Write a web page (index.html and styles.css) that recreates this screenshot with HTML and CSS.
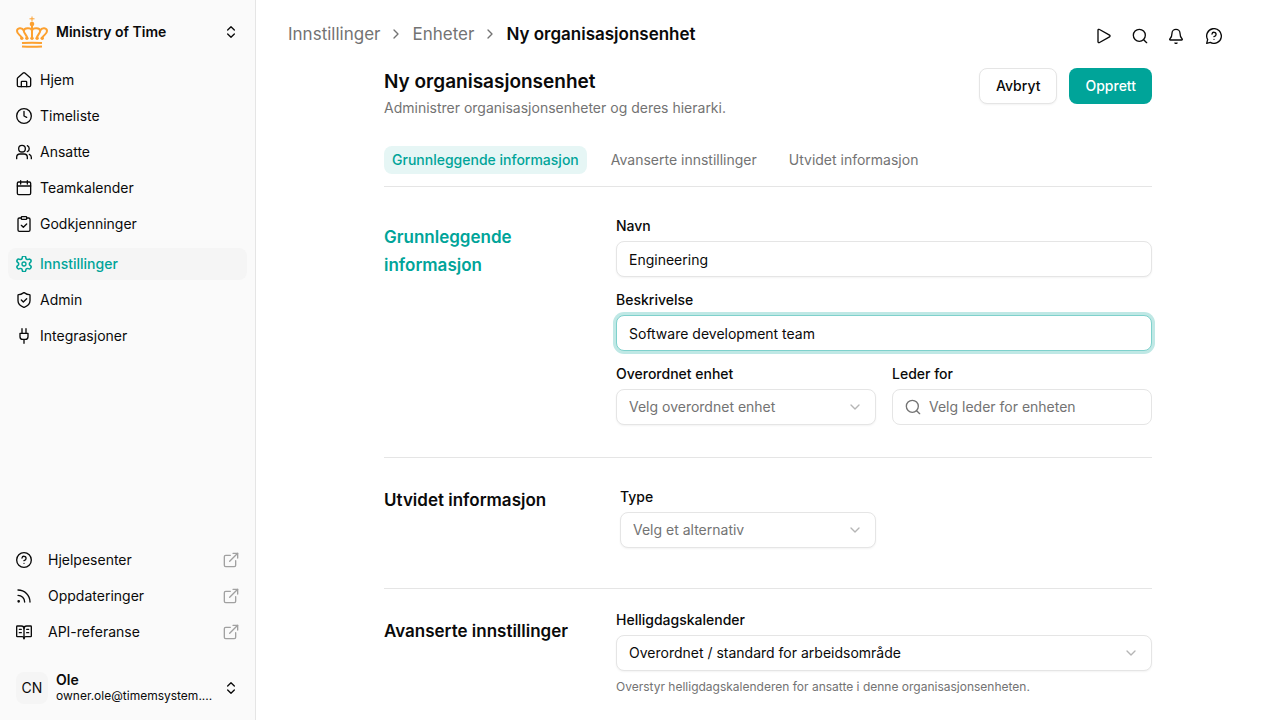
FILE: index.html
```
<!DOCTYPE html>
<html lang="no">
<head>
    <meta charset="UTF-8">
    <meta name="viewport" content="width=device-width, initial-scale=1.0">
    <title>Ny organisasjonsenhet</title>
    <link rel="stylesheet" href="styles.css">
</head>

<body>
    <!-- Shared icons -->
    <svg class="sprite" aria-hidden="true">
        <symbol id="chevrons" viewBox="0 0 24 24"><path d="m7 15 5 5 5-5"/><path d="m7 9 5-5 5 5"/></symbol>
        <symbol id="chevron-right" viewBox="0 0 24 24"><path d="m9 18 6-6-6-6"/></symbol>
        <symbol id="chevron-down" viewBox="0 0 24 24"><path d="m6 9 6 6 6-6"/></symbol>
        <symbol id="search" viewBox="0 0 24 24"><circle cx="11" cy="11" r="9"/><path d="m22 22-4.500-4.500"/></symbol>
        <symbol id="external" viewBox="0 0 24 24"><path d="M15 2h7v7"/><path d="M10 14 22 2"/><path d="M19 13v7a2 2 0 0 1-2 2H4a2 2 0 0 1-2-2V7a2 2 0 0 1 2-2h7"/></symbol>
    </svg>

    <aside class="sidebar">
        <button type="button" class="switcher">
            <svg class="crown" viewBox="0 0 32 32">
                <path class="thin" d="M16 .5v5M13.500 2.800h5"/>
                <circle class="dot" cx="16" cy="8" r="2.300"/>
                <path d="M5.500 21.500C4.500 19 1 18 1 15c0-3 5-4 6.800-.5M26.500 21.500c1-2.500 4.500-3.500 4.500-6.500 0-3-5-4-6.800-.5"/>
                <path d="M11 21.500c-.5-2.500-3.200-4.500-3.200-6.500 0-3.500 7.500-3.500 8.200-.5M21 21.500c.5-2.500 3.200-4.500 3.200-6.500 0-3.500-7.500-3.500-8.200-.5M16 10v11"/>
                <circle class="dot" cx="5.800" cy="22.300" r="1.700"/><circle class="dot" cx="10.900" cy="22.300" r="1.700"/><circle class="dot" cx="16" cy="22.300" r="1.700"/><circle class="dot" cx="21.100" cy="22.300" r="1.700"/><circle class="dot" cx="26.200" cy="22.300" r="1.700"/>
                <path d="M6 27.100q10-.9 20 0M6 30.400q10 .9 20 0"/>
            </svg>
            <span class="org-name">Ministry of Time</span>
            <svg class="icon"><use href="#chevrons"/></svg>
        </button>

        <nav class="nav" aria-label="Hovedmeny">
            <a href="#" class="nav-link">
                <svg class="icon" viewBox="0 0 24 24"><path d="M8 22v-7a1 1 0 0 1 1-1h6a1 1 0 0 1 1 1v7"/><path d="M2 10a2 2 0 0 1 .7-1.500l8-6.900a2 2 0 0 1 2.600 0l8 6.900A2 2 0 0 1 22 10v10a2 2 0 0 1-2 2H4a2 2 0 0 1-2-2z"/></svg>
                <span>Hjem</span>
            </a>
            <a href="#" class="nav-link">
                <svg class="icon" viewBox="0 0 24 24"><circle cx="12" cy="12" r="11"/><path d="M12 5v7l4 2"/></svg>
                <span>Timeliste</span>
            </a>
            <a href="#" class="nav-link">
                <svg class="icon" viewBox="0 0 24 24"><path d="M17 22v-2a5 5 0 0 0-5-5H6a5 5 0 0 0-5 5v2"/><circle cx="9" cy="7" r="5"/><path d="M23 22v-2a5 5 0 0 0-3-4.500"/><path d="M17 2.500a5 5 0 0 1 0 9"/></svg>
                <span>Ansatte</span>
            </a>
            <a href="#" class="nav-link">
                <svg class="icon" viewBox="0 0 24 24"><path d="M7 1v5M17 1v5"/><rect x="2" y="3" width="20" height="19" rx="2"/><path d="M2 9h20"/></svg>
                <span>Teamkalender</span>
            </a>
            <a href="#" class="nav-link">
                <svg class="icon" viewBox="0 0 24 24"><rect x="8" y="1" width="8" height="4" rx="1"/><path d="M16 3h3a2 2 0 0 1 2 2v16a2 2 0 0 1-2 2H5a2 2 0 0 1-2-2V5a2 2 0 0 1 2-2h3"/><path d="m8 14 3 3 5-5"/></svg>
                <span>Godkjenninger</span>
            </a>
        </nav>

        <nav class="nav" aria-label="Administrasjon">
            <a href="#" class="nav-link active" aria-current="page">
                <svg class="icon" viewBox="0 0 24 24"><path d="M9.700 4.100a2.300 2.300 0 0 1 4.600 0 2.300 2.300 0 0 0 3.300 1.900 2.300 2.300 0 0 1 2.300 4 2.300 2.300 0 0 0 0 3.900 2.300 2.300 0 0 1-2.300 4 2.300 2.300 0 0 0-3.300 1.900 2.300 2.300 0 0 1-4.600 0 2.300 2.300 0 0 0-3.300-1.900 2.300 2.300 0 0 1-2.300-4 2.300 2.300 0 0 0 0-3.900 2.300 2.300 0 0 1 2.300-4 2.300 2.300 0 0 0 3.300-1.900" transform="translate(-2 -2) scale(1.170)"/><circle cx="12" cy="12" r="3"/></svg>
                <span>Innstillinger</span>
            </a>
            <a href="#" class="nav-link">
                <svg class="icon" viewBox="0 0 24 24"><path d="M21 13c0 5-4 8-8.700 9.900a1 1 0 0 1-.6 0C7 21 3 18 3 13V5a1 1 0 0 1 1-1c2.500 0 5-1.200 7.200-2.700a1 1 0 0 1 1.600 0C15 2.800 17.500 4 20 4a1 1 0 0 1 1 1z"/><path d="m8 12 3 3 5-5"/></svg>
                <span>Admin</span>
            </a>
            <a href="#" class="nav-link">
                <svg class="icon" viewBox="0 0 24 24"><path d="M12 23v-5M9 8V1M15 8V1"/><path d="M18 8v5a4 4 0 0 1-4 4h-4a4 4 0 0 1-4-4V8z"/></svg>
                <span>Integrasjoner</span>
            </a>
        </nav>

        <nav class="nav nav-help" aria-label="Hjelp">
            <a href="#" class="nav-link">
                <svg class="icon" viewBox="0 0 24 24"><circle cx="12" cy="12" r="11"/><path d="M9 9a3 3 0 0 1 6 1c0 2-3 3-3 3M12 17h.01"/></svg>
                <span>Hjelpesenter</span>
                <svg class="icon external"><use href="#external"/></svg>
            </a>
            <a href="#" class="nav-link">
                <svg class="icon" viewBox="0 0 24 24"><path d="M3 11a10 10 0 0 1 10 10"/><path d="M3 3a18 18 0 0 1 18 18"/><circle cx="4" cy="20" r="1"/></svg>
                <span>Oppdateringer</span>
                <svg class="icon external"><use href="#external"/></svg>
            </a>
            <a href="#" class="nav-link">
                <svg class="icon" viewBox="0 0 24 24"><path d="M12 6v16M5 8h3M5 13h3M16 8h3M16 13h3"/><path d="M2 19a1 1 0 0 1-1-1V4a1 1 0 0 1 1-1h6a4 4 0 0 1 4 4 4 4 0 0 1 4-4h6a1 1 0 0 1 1 1v14a1 1 0 0 1-1 1h-7a3 3 0 0 0-3 3 3 3 0 0 0-3-3z"/></svg>
                <span>API-referanse</span>
                <svg class="icon external"><use href="#external"/></svg>
            </a>
        </nav>

        <button type="button" class="switcher user">
            <span class="avatar">CN</span>
            <span class="user-info">
                <span class="user-name">Ole</span>
                <span class="user-email">owner.ole@timemsystem....</span>
            </span>
            <svg class="icon"><use href="#chevrons"/></svg>
        </button>
    </aside>

    <main class="main">
        <header class="topbar">
            <nav class="breadcrumb" aria-label="Brødsmulesti">
                <a href="#">Innstillinger</a>
                <svg class="icon"><use href="#chevron-right"/></svg>
                <a href="#">Enheter</a>
                <svg class="icon"><use href="#chevron-right"/></svg>
                <span class="current">Ny organisasjonsenhet</span>
            </nav>
            <div class="actions">
                <button type="button" class="icon-btn" aria-label="Start">
                    <svg class="icon" viewBox="0 0 24 24"><path d="M3 3.500A1.500 1.500 0 0 1 5.300 2.200l15 8.500a1.500 1.500 0 0 1 0 2.600l-15 8.500A1.500 1.500 0 0 1 3 20.500z"/></svg>
                </button>
                <button type="button" class="icon-btn" aria-label="Søk">
                    <svg class="icon"><use href="#search"/></svg>
                </button>
                <button type="button" class="icon-btn" aria-label="Varsler">
                    <svg class="icon" viewBox="0 0 24 24"><path d="M10.500 22.500a2 2 0 0 0 3 0"/><path d="M3 16c-1 1-.5 2 .7 2h16.600c1.200 0 1.700-1 .7-2-1.500-1.500-3-3-3-8A6 6 0 0 0 6 8c0 5-1.500 6.500-3 8"/></svg>
                </button>
                <button type="button" class="icon-btn help" aria-label="Hjelp">
                    <svg class="icon" viewBox="0 0 24 24"><path d="M6.500 21.500A11 11 0 1 0 2.500 17.500L1 23z"/><path d="M9 9a3 3 0 0 1 6 1c0 2-3 3-3 3M12 17h.01"/></svg>
                </button>
            </div>
        </header>

        <form class="content">
            <div class="page-head">
                <div>
                    <h1>Ny organisasjonsenhet</h1>
                    <p class="subtitle">Administrer organisasjonsenheter og deres hierarki.</p>
                </div>
                <div class="buttons">
                    <button type="button" class="btn">Avbryt</button>
                    <button type="submit" class="btn btn-primary">Opprett</button>
                </div>
            </div>

            <nav class="tabs" aria-label="Seksjoner">
                <a href="#basic" class="tab active">Grunnleggende informasjon</a>
                <a href="#advanced" class="tab">Avanserte innstillinger</a>
                <a href="#extended" class="tab">Utvidet informasjon</a>
            </nav>

            <section class="section section-basic" id="basic">
                <h2>Grunnleggende informasjon</h2>
                <div class="fields">
                    <div class="field">
                        <label for="name">Navn</label>
                        <input type="text" id="name" name="name" class="control" value="Engineering">
                    </div>
                    <div class="field">
                        <label for="description">Beskrivelse</label>
                        <input type="text" id="description" name="description" class="control focused" value="Software development team">
                    </div>
                    <div class="row">
                        <div class="field">
                            <label for="parent">Overordnet enhet</label>
                            <div class="select">
                                <select id="parent" name="parent" class="control empty">
                                    <option value="">Velg overordnet enhet</option>
                                </select>
                                <svg class="icon arrow"><use href="#chevron-down"/></svg>
                            </div>
                        </div>
                        <div class="field">
                            <label for="leader">Leder for</label>
                            <div class="control search-box">
                                <svg class="icon"><use href="#search"/></svg>
                                <input type="text" id="leader" name="leader" placeholder="Velg leder for enheten">
                            </div>
                        </div>
                    </div>
                </div>
            </section>

            <section class="section section-extended" id="extended">
                <h2>Utvidet informasjon</h2>
                <div class="fields">
                    <div class="row inset">
                        <div class="field">
                            <label for="type">Type</label>
                            <div class="select">
                                <select id="type" name="type" class="control empty">
                                    <option value="">Velg et alternativ</option>
                                </select>
                                <svg class="icon arrow"><use href="#chevron-down"/></svg>
                            </div>
                        </div>
                    </div>
                </div>
            </section>

            <section class="section" id="advanced">
                <h2>Avanserte innstillinger</h2>
                <div class="fields">
                    <div class="field">
                        <label for="calendar">Helligdagskalender</label>
                        <div class="select">
                            <select id="calendar" name="calendar" class="control">
                                <option>Overordnet / standard for arbeidsområde</option>
                            </select>
                            <svg class="icon arrow"><use href="#chevron-down"/></svg>
                        </div>
                        <p class="hint">Overstyr helligdagskalenderen for ansatte i denne organisasjonsenheten.</p>
                    </div>
                </div>
            </section>
        </form>
    </main>
</body>
</html>
```
FILE: styles.css
```
* {
    box-sizing: border-box;
}
body {
    margin: 0;
    display: flex;
    height: 100vh;
    overflow: hidden;
    font-family: Inter, "Liberation Sans", sans-serif;
    font-size: 14px;
    line-height: 20px;
    color: #0a0a0a;
    background: #fff;
}
h1, h2, p {
    margin: 0;
}
a {
    color: inherit;
    text-decoration: none;
}
button, input, select {
    font: inherit;
    color: inherit;
}
button {
    cursor: pointer;
}
.sprite {
    display: none;
}
.icon {
    flex: none;
    width: 16px;
    height: 16px;
    fill: none;
    stroke: currentColor;
    stroke-width: 2;
    stroke-linecap: round;
    stroke-linejoin: round;
}

/* Sidebar */
.sidebar {
    flex: none;
    display: flex;
    flex-direction: column;
    width: 256px;
    padding: 8px;
    background: #fafafa;
    border-right: 1px solid #e5e5e5;
}
.switcher {
    display: flex;
    align-items: center;
    gap: 8px;
    width: 100%;
    height: 48px;
    padding: 8px;
    border: none;
    border-radius: 8px;
    background: none;
    text-align: left;
}
.crown {
    flex: none;
    width: 32px;
    height: 32px;
    fill: none;
    stroke: #fca02f;
    stroke-width: 2;
}
.crown .thin {
    stroke-width: 1;
}
.crown .dot {
    fill: #fca02f;
    stroke: none;
}
.org-name {
    flex: 1;
    font-weight: 600;
}
.nav {
    display: flex;
    flex-direction: column;
    gap: 4px;
    margin-top: 8px;
}
.nav-link {
    display: flex;
    align-items: center;
    gap: 8px;
    height: 32px;
    padding: 0 8px;
    border-radius: 8px;
}
.nav-link.active {
    background: #f5f5f5;
    color: #00a499;
    font-weight: 500;
}
.nav-help {
    margin-top: auto;
    margin-bottom: 16px;
}
.nav-help .nav-link {
    gap: 16px;
}
.nav-link .external {
    margin-left: auto;
    color: #a1a1a1;
}
.avatar {
    flex: none;
    width: 32px;
    border-radius: 8px;
    background: #f5f5f5;
    line-height: 32px;
    text-align: center;
}
.user-info {
    flex: 1;
    min-width: 0;
}
.user-name, .user-email {
    display: block;
    line-height: 16px;
    white-space: nowrap;
}
.user-name {
    font-weight: 600;
}
.user-email {
    font-size: 12px;
}

/* Top bar */
.main {
    flex: 1;
    min-width: 0;
    overflow: hidden;
}
.topbar {
    display: flex;
    align-items: center;
    justify-content: space-between;
    height: 68px;
    padding: 0 50px 0 32px;
}
.breadcrumb {
    display: flex;
    align-items: center;
    gap: 8px;
    font-size: 17px;
    line-height: 28px;
    color: #737373;
}
.breadcrumb .current {
    color: #0a0a0a;
    font-weight: 600;
}
.actions {
    display: flex;
    gap: 4px;
    padding-top: 4px;
}
.icon-btn {
    display: flex;
    align-items: center;
    justify-content: center;
    width: 32px;
    height: 32px;
    padding: 0;
    border: none;
    background: none;
}
.icon-btn.help {
    margin-left: 2px;
}

/* Form */
.content {
    max-width: 768px;
    margin: 0 auto;
}
.page-head {
    display: flex;
    align-items: flex-start;
    justify-content: space-between;
}
h1 {
    font-size: 19px;
    line-height: 28px;
    font-weight: 600;
}
.subtitle {
    margin-top: 2px;
    color: #737373;
}
.buttons {
    display: flex;
    gap: 12px;
}
.btn {
    height: 36px;
    padding: 0 16px;
    border: 1px solid #e5e5e5;
    border-radius: 8px;
    background: #fff;
    box-shadow: 0 1px 2px rgba(0, 0, 0, 0.05);
    font-weight: 500;
}
.btn-primary {
    border: none;
    background: #00a499;
    box-shadow: none;
    color: #fff;
}
.tabs {
    display: flex;
    gap: 16px;
    margin-top: 28px;
    padding-bottom: 12px;
    border-bottom: 1px solid #e5e5e5;
}
.tab {
    padding: 4px 8px;
    border-radius: 8px;
    color: #737373;
}
.tab.active {
    background: #e6f6f5;
    color: #00a499;
    font-weight: 500;
}
.section {
    display: grid;
    grid-template-columns: 200px 1fr;
    gap: 32px;
    padding: 20px 0 32px;
}
.section + .section {
    border-top: 1px solid #e5e5e5;
}
.section-basic, .section-extended {
    padding-top: 28px;
}
.section-extended {
    padding-bottom: 40px;
}
h2 {
    margin-top: 8px;
    font-size: 17px;
    line-height: 28px;
    font-weight: 600;
}
.section-basic h2 {
    color: #00a499;
}
.section-extended h2 {
    margin-top: 0;
}
.fields {
    display: flex;
    flex-direction: column;
    gap: 12px;
}
.field label {
    display: block;
    margin-bottom: 4px;
    font-weight: 500;
    line-height: 22px;
}
.row {
    display: grid;
    grid-template-columns: repeat(2, minmax(0, 1fr));
    gap: 16px;
}
.row.inset {
    padding: 0 4px;
}
.control {
    width: 100%;
    height: 36px;
    padding: 0 12px;
    border: 1px solid #e5e5e5;
    border-radius: 8px;
    background: #fff;
    box-shadow: 0 1px 2px rgba(0, 0, 0, 0.05);
    outline: none;
}
.control:focus, .control.focused {
    border-color: #7fd1cc;
    box-shadow: 0 0 0 3px #bfe8e5;
}
.select {
    position: relative;
}
.select .control {
    display: block;
    appearance: none;
}
.control.empty {
    color: #737373;
}
.arrow {
    position: absolute;
    top: 10px;
    right: 13px;
    color: #b5b5b5;
    pointer-events: none;
}
.search-box {
    display: flex;
    align-items: center;
    gap: 8px;
    box-shadow: none;
    color: #737373;
}
.search-box input {
    flex: 1;
    min-width: 0;
    padding: 0;
    border: none;
    outline: none;
    background: none;
}
.search-box input::placeholder {
    color: #737373;
}
.hint {
    margin-top: 8px;
    font-size: 12px;
    line-height: 16px;
    color: #737373;
}
```
